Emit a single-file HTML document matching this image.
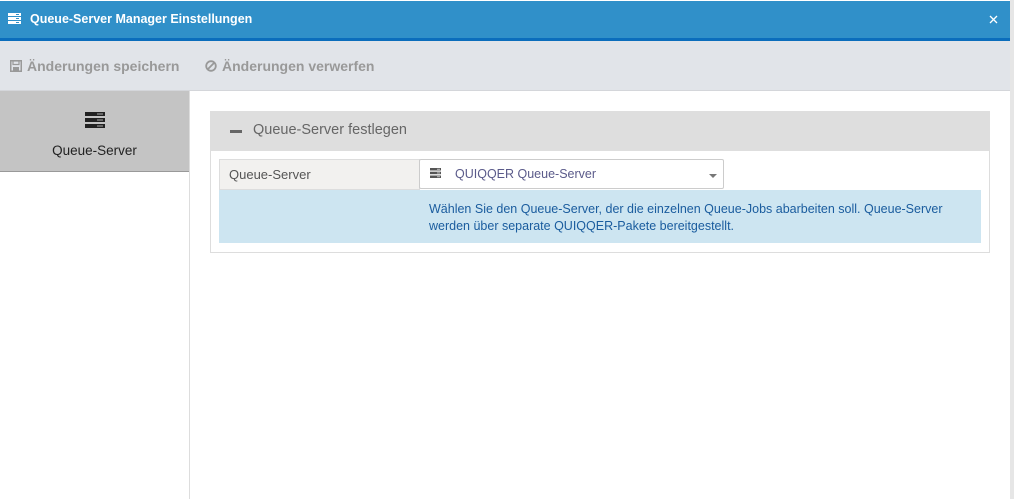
<!DOCTYPE html>
<html><head><meta charset="utf-8"><style>
*{box-sizing:border-box;margin:0;padding:0}
body{width:1014px;height:499px;background:#fff;font-family:"Liberation Sans",sans-serif;position:relative;overflow:hidden}
.abs{position:absolute}
</style></head><body>
<div class="abs" style="left:1010px;top:0;width:4px;height:499px;background:#e6e6e6"></div>
<div class="abs" style="left:0;top:1px;width:1010px;height:37px;background:#3090c9"></div>
<div class="abs" style="left:0;top:38px;width:1010px;height:3px;background:#0b6dbc"></div>
<svg class="abs" style="left:8px;top:13px" width="13" height="11" viewBox="0 0 13 11"><rect x="0" y="0" width="13" height="3" fill="#fff"/><rect x="0" y="4" width="13" height="3" fill="#fff"/><rect x="0" y="8" width="13" height="3" fill="#fff"/><rect x="8" y="1" width="3" height="1" fill="#3090c9"/><rect x="8" y="5" width="3" height="1" fill="#3090c9"/><rect x="8" y="9" width="3" height="1" fill="#3090c9"/></svg>
<div class="abs" style="left:30px;top:12px;color:#fff;font-weight:bold;font-size:12.5px">Queue-Server Manager Einstellungen</div>
<svg class="abs" style="left:989px;top:15px" width="9" height="9" viewBox="0 0 9 9"><path d="M1 1L8 8M8 1L1 8" stroke="#fff" stroke-width="1.3"/></svg>
<div class="abs" style="left:0;top:41px;width:1010px;height:50px;background:#e1e4e9;border-bottom:1px solid #d4d6da"></div>
<svg class="abs" style="left:10px;top:60px" width="12" height="12" viewBox="0 0 12 12"><rect x="0.75" y="0.75" width="10.5" height="10.5" fill="none" stroke="#999" stroke-width="1.5"/><rect x="3" y="1" width="6" height="3.5" fill="none" stroke="#999" stroke-width="1.2"/><rect x="3" y="7" width="6" height="4" fill="#999"/></svg>
<div class="abs" style="left:27px;top:58px;color:#999;font-weight:bold;font-size:14px">Änderungen speichern</div>
<svg class="abs" style="left:205px;top:60px" width="12" height="12" viewBox="0 0 12 12"><circle cx="6" cy="6" r="4.8" fill="none" stroke="#999" stroke-width="1.8"/><line x1="2.8" y1="9.2" x2="9.2" y2="2.8" stroke="#999" stroke-width="1.8"/></svg>
<div class="abs" style="left:222px;top:58px;color:#999;font-weight:bold;font-size:14px">Änderungen verwerfen</div>
<div class="abs" style="left:0;top:91px;width:189px;height:81px;background:#c4c4c4;border-bottom:1px solid #999"></div>
<div class="abs" style="left:189px;top:91px;width:1px;height:408px;background:#ddd"></div>
<svg class="abs" style="left:85px;top:112px" width="20" height="16" viewBox="0 0 20 16"><rect x="0" y="0" width="20" height="4" fill="#222"/><rect x="0" y="6" width="20" height="4" fill="#222"/><rect x="0" y="12" width="20" height="4" fill="#222"/><rect x="12" y="1.5" width="6" height="1" fill="#aaa"/><rect x="12" y="7.5" width="6" height="1" fill="#aaa"/><rect x="12" y="13.5" width="6" height="1" fill="#aaa"/></svg>
<div class="abs" style="left:0;top:143px;width:189px;text-align:center;font-size:13.5px;color:#222">Queue-Server</div>
<div class="abs" style="left:210px;top:111px;width:780px;height:142px;border:1px solid #ddd"></div>
<div class="abs" style="left:210px;top:111px;width:780px;height:40px;background:#dedede"></div>
<div class="abs" style="left:230px;top:130px;width:12px;height:3px;background:#666"></div>
<div class="abs" style="left:253px;top:122px;color:#666;font-size:14.5px">Queue-Server festlegen</div>
<div class="abs" style="left:219px;top:159px;width:201px;height:31px;background:#f2f1ef;border:1px solid #ddd"></div>
<div class="abs" style="left:229px;top:167px;color:#555;font-size:13px">Queue-Server</div>
<div class="abs" style="left:419px;top:159px;width:305px;height:30px;background:#fff;border:1px solid #ccc;border-radius:2px"></div>
<svg class="abs" style="left:430px;top:168px" width="11" height="10" viewBox="0 0 11 10"><rect x="0" y="0" width="11" height="2.5" fill="#555"/><rect x="0" y="3.7" width="11" height="2.5" fill="#555"/><rect x="0" y="7.5" width="11" height="2.5" fill="#555"/><rect x="7" y="0.8" width="3" height="0.9" fill="#ccc"/><rect x="7" y="4.5" width="3" height="0.9" fill="#ccc"/><rect x="7" y="8.3" width="3" height="0.9" fill="#ccc"/></svg>
<div class="abs" style="left:455px;top:167px;color:#5a5a8a;font-size:12.5px">QUIQQER Queue-Server</div>
<div class="abs" style="left:709px;top:174px;width:0;height:0;border-left:4px solid transparent;border-right:4px solid transparent;border-top:4px solid #777"></div>
<div class="abs" style="left:219px;top:190px;width:762px;height:53px;background:#cde5f1"></div>
<div class="abs" style="left:429px;top:201px;color:#1a5c9e;font-size:12.5px;line-height:17px">Wählen Sie den Queue-Server, der die einzelnen Queue-Jobs abarbeiten soll. Queue-Server<br>werden über separate QUIQQER-Pakete bereitgestellt.</div>
</body></html>
